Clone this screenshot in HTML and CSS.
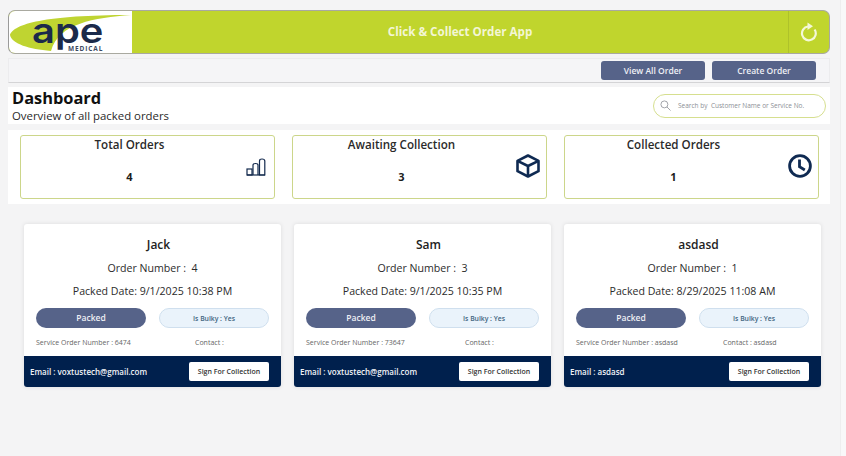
FILE: index.html
```html
<!DOCTYPE html>
<html lang="en">

<head>
    <meta charset="UTF-8">
    <meta name="viewport" content="width=device-width, initial-scale=1.0">
    <title>Click &amp; Collect Order App</title>
    <link rel="stylesheet" href="styles.css">
</head>

<body>
    <div class="page">
        <!-- Header -->
        <div class="header">
            <div class="logo">
                <svg class="swoosh" width="123" height="44" viewBox="0 0 123 44">
                    <path d="M1 24 C5 13 35 4 122 4 C85 7 50 12 42 40 C20 38 3 33 1 24 Z" fill="#bfd431" />
                </svg>
                <span class="logo-name">ape</span>
                <span class="logo-sub">MEDICAL</span>
            </div>
            <div class="app-title">Click &amp; Collect Order App</div>
            <div class="refresh">
                <svg width="18" height="20" viewBox="0 0 18 20" fill="none" stroke="#f4f8d8" stroke-width="2.2">
                    <path d="M14.6 7.5 A6.9 6.9 0 1 1 8 4.5" />
                    <path d="M7.5 0.6 L13 4.3 L7.5 8 Z" fill="#f4f8d8" stroke="none" />
                </svg>
            </div>
        </div>

        <!-- Toolbar -->
        <div class="toolbar">
            <button class="tool-btn">View All Order</button>
            <button class="tool-btn">Create Order</button>
        </div>

        <!-- Title and search -->
        <div class="title-row">
            <div>
                <h1>Dashboard</h1>
                <p>Overview of all packed orders</p>
            </div>
            <div class="search">
                <svg width="11" height="11" viewBox="0 0 12 12" fill="none" stroke="#9a9da3" stroke-width="1">
                    <circle cx="4.8" cy="4.8" r="3.8" />
                    <path d="M7.6 7.6 L11.5 11.5" />
                </svg>
                <span>Search by&nbsp; Customer Name or Service No.</span>
            </div>
        </div>

        <!-- Stats -->
        <div class="stats">
            <div class="stat">
                <div class="stat-name">Total Orders</div>
                <div class="stat-value">4</div>
                <svg class="stat-icon bars" width="20" height="18" viewBox="0 0 20 18" fill="none" stroke="#12284c" stroke-width="1.2">
                    <rect x="1" y="11" width="5" height="6" />
                    <path d="M7 17 V7 Q7 5.5 9.5 5.5 Q12 5.5 12 7 V17" />
                    <path d="M13.5 17 V3 Q13.5 1 16 1 Q18.8 1 18.8 3 V17 Z" />
                    <path d="M1 17 H19" />
                </svg>
            </div>
            <div class="stat">
                <div class="stat-name">Awaiting Collection</div>
                <div class="stat-value">3</div>
                <svg class="stat-icon" width="24" height="24" viewBox="0 0 24 24" fill="none" stroke="#0f2a52" stroke-width="2.6" stroke-linejoin="round">
                    <path d="M12 1.5 L22.5 6.8 V17.2 L12 22.5 L1.5 17.2 V6.8 Z" />
                    <path d="M1.5 6.8 L12 12 L22.5 6.8 M12 12 V22.5" />
                </svg>
            </div>
            <div class="stat">
                <div class="stat-name">Collected Orders</div>
                <div class="stat-value">1</div>
                <svg class="stat-icon" width="24" height="24" viewBox="0 0 24 24" fill="none" stroke="#0f2a52" stroke-width="2.8">
                    <circle cx="12" cy="12" r="10.4" />
                    <path d="M11.5 5.5 V12.8 L16.8 16" />
                </svg>
            </div>
        </div>

        <!-- Orders -->
        <div class="orders">
            <div class="order">
                <div class="order-body">
                    <h2>Jack</h2>
                    <div class="order-line">Order Number :&nbsp; 4</div>
                    <div class="order-line">Packed Date: 9/1/2025 10:38 PM</div>
                    <div class="pills">
                        <span class="pill packed">Packed</span>
                        <span class="pill bulky">Is Bulky : Yes</span>
                    </div>
                    <div class="meta">
                        <span>Service Order Number : 6474</span>
                        <span>Contact :</span>
                    </div>
                </div>
                <div class="order-foot">
                    <span>Email : voxtustech@gmail.com</span>
                    <button class="sign-btn">Sign For Collection</button>
                </div>
            </div>

            <div class="order">
                <div class="order-body">
                    <h2>Sam</h2>
                    <div class="order-line">Order Number :&nbsp; 3</div>
                    <div class="order-line">Packed Date: 9/1/2025 10:35 PM</div>
                    <div class="pills">
                        <span class="pill packed">Packed</span>
                        <span class="pill bulky">Is Bulky : Yes</span>
                    </div>
                    <div class="meta">
                        <span>Service Order Number : 73647</span>
                        <span>Contact :</span>
                    </div>
                </div>
                <div class="order-foot">
                    <span>Email : voxtustech@gmail.com</span>
                    <button class="sign-btn">Sign For Collection</button>
                </div>
            </div>

            <div class="order">
                <div class="order-body">
                    <h2>asdasd</h2>
                    <div class="order-line">Order Number :&nbsp; 1</div>
                    <div class="order-line">Packed Date: 8/29/2025 11:08 AM</div>
                    <div class="pills">
                        <span class="pill packed">Packed</span>
                        <span class="pill bulky">Is Bulky : Yes</span>
                    </div>
                    <div class="meta">
                        <span>Service Order Number : asdasd</span>
                        <span class="meta-wide">Contact : asdasd</span>
                    </div>
                </div>
                <div class="order-foot">
                    <span>Email : asdasd</span>
                    <button class="sign-btn">Sign For Collection</button>
                </div>
            </div>
        </div>
    </div>
    <div class="side-strip"></div>
</body>

</html>
```

FILE: styles.css
```css
* {
    box-sizing: border-box;
}

body {
    margin: 0;
    height: 456px;
    overflow: hidden;
    display: flex;
    justify-content: space-between;
    background-color: #f4f4f5;
    font-family: "Open Sans", sans-serif;
    color: #1c1c1c;
}

.page {
    width: 822px;
    flex: none;
    margin-left: 8px;
    padding-top: 10px;
}

.side-strip {
    width: 6px;
    flex: none;
    background-color: #f8f8f9;
    border-left: 1px solid #eeeeef;
}

/* Header */
.header {
    display: flex;
    height: 44px;
    background-color: #c0d52d;
    border: 1px solid #a9a9a0;
    border-left-color: #9a9a9a;
    border-radius: 7px;
    overflow: hidden;
}

.logo {
    position: relative;
    width: 123px;
    flex: none;
    background-color: white;
}

.swoosh {
    position: absolute;
    top: 0;
    left: 0;
}

.logo-name {
    position: absolute;
    top: 7px;
    left: 23px;
    font-family: "Inter", sans-serif;
    font-size: 35px;
    font-weight: 600;
    line-height: 25px;
    color: #1b2a4a;
    transform: scaleX(1.14);
    transform-origin: left;
}

.logo-sub {
    position: absolute;
    top: 34px;
    left: 59px;
    font-size: 6.5px;
    font-weight: 700;
    line-height: 8px;
    letter-spacing: 0.9px;
    color: #3d4a63;
}

.app-title {
    flex: 1;
    text-align: center;
    line-height: 42px;
    font-size: 11.6px;
    font-weight: 700;
    color: #f3f6d5;
}

.refresh {
    width: 41px;
    flex: none;
    display: flex;
    align-items: center;
    justify-content: center;
    border-left: 1px solid #aec22a;
}

/* Toolbar */
.toolbar {
    display: flex;
    justify-content: flex-end;
    gap: 7px;
    height: 25px;
    margin-top: 4px;
    padding: 2px 13px 0 0;
    background-color: #f5f5f7;
    border: 1px solid #ececee;
    border-bottom: 1px solid #d4d4d6;
}

.tool-btn {
    width: 104px;
    height: 19px;
    padding: 0;
    border: none;
    border-radius: 3px;
    background-color: #566389;
    color: #eef0f5;
    font-family: "Open Sans", sans-serif;
    font-size: 8.5px;
    font-weight: 600;
}

/* Title row */
.title-row {
    display: flex;
    justify-content: space-between;
    align-items: center;
    height: 37px;
    margin-top: 4px;
    padding: 0 4px;
    background-color: white;
}

h1 {
    margin: 0;
    font-size: 16.4px;
    line-height: 20px;
    font-weight: 700;
    color: #111;
}

.title-row p {
    margin: 0;
    font-size: 11.4px;
    line-height: 15px;
    color: #2a2a2a;
}

.search {
    display: flex;
    align-items: center;
    gap: 7px;
    width: 173px;
    height: 24px;
    padding-left: 6px;
    border: 1px solid #d6df8f;
    border-radius: 12px;
    font-size: 6.5px;
    color: #8c8f96;
}

/* Stats */
.stats {
    display: grid;
    grid-template-columns: repeat(3, 255px);
    gap: 17px;
    height: 74px;
    margin-top: 6px;
    padding: 5px 0 0 12px;
    background-color: white;
}

.stat {
    position: relative;
    height: 64px;
    border: 1px solid #ccd68a;
    border-radius: 3px;
    text-align: center;
}

.stat-name {
    margin-top: 1px;
    padding-right: 36px;
    font-size: 11.6px;
    line-height: 16px;
    font-weight: 600;
    color: #2a2a2a;
}

.stat-value {
    margin-top: 16px;
    padding-right: 36px;
    font-size: 11px;
    line-height: 16px;
    font-weight: 700;
}

.stat-icon {
    position: absolute;
    top: 18px;
    right: 6px;
}

.stat-icon.bars {
    top: 22px;
    right: 8px;
}

/* Orders */
.orders {
    display: grid;
    grid-template-columns: repeat(3, 257px);
    gap: 13px;
    margin-top: 20px;
    padding-left: 16px;
}

.order {
    height: 163px;
    background-color: white;
    border-radius: 3px;
    box-shadow: 0 0 4px rgba(0, 0, 0, 0.1);
    display: flex;
    flex-direction: column;
    overflow: hidden;
}

.order-body {
    flex: 1;
    padding: 12px 12px 0;
    text-align: center;
}

h2 {
    margin: 0 0 7px;
    padding-left: 12px;
    font-size: 12px;
    line-height: 17px;
    font-weight: 600;
    color: #222;
}

.order-line {
    height: 23px;
    font-size: 10.6px;
    line-height: 16px;
    color: #2b2b2b;
}

.pills {
    display: flex;
    justify-content: space-between;
    margin-top: 2px;
}

.pill {
    width: 110px;
    height: 20px;
    border-radius: 10px;
    line-height: 19px;
    text-align: center;
}

.packed {
    background-color: #566389;
    color: #eef0f5;
    font-size: 8.5px;
    font-weight: 600;
}

.bulky {
    background-color: #eaf3fb;
    border: 1px solid #cfdfee;
    color: #41647f;
    font-size: 6.8px;
    font-weight: 600;
}

.meta {
    display: flex;
    margin-top: 10px;
    font-size: 7px;
    line-height: 10px;
    color: #666;
    text-align: left;
}

.meta span:first-child {
    width: 159px;
    flex: none;
}

.meta-wide {
    margin-left: -12px;
}

.order-foot {
    height: 31px;
    flex: none;
    display: flex;
    justify-content: space-between;
    align-items: center;
    padding: 0 12px 0 6px;
    background-color: #00204d;
    color: #f1f3f7;
    font-size: 8px;
    font-weight: 600;
}

.sign-btn {
    width: 80px;
    height: 19px;
    padding: 0;
    border: none;
    border-radius: 2px;
    background-color: white;
    color: #333;
    font-family: "Open Sans", sans-serif;
    font-size: 7px;
    font-weight: 600;
}
```
